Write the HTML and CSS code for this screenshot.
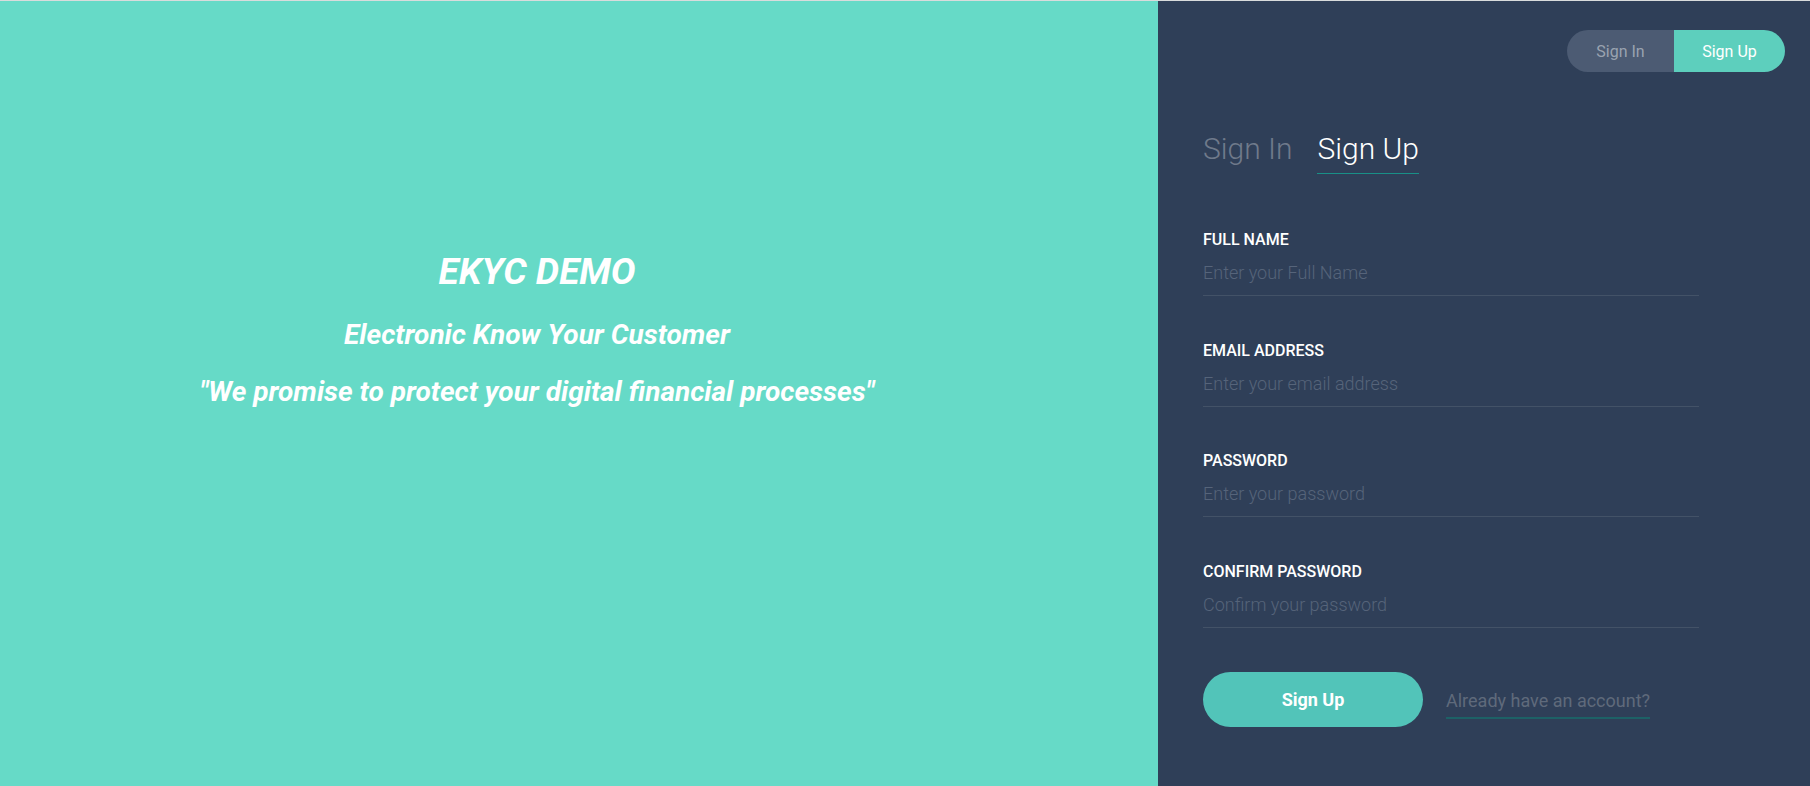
FILE: index.html
```html
<!DOCTYPE html>
<html lang="en">
<head>
<meta charset="utf-8">
<title>EKYC DEMO</title>
<link rel="stylesheet" href="styles.css">
</head>
<body>
<div class="app">
  <aside class="aside">
    <h1 class="aside-title">EKYC DEMO</h1>
    <p class="aside-sub">Electronic Know Your Customer</p>
    <p class="aside-quote">"We promise to protect your digital financial processes"</p>
  </aside>
  <main class="form-panel">
    <div class="switcher">
      <a class="switcher-item" href="#">Sign In</a>
      <a class="switcher-item switcher-item-active" href="#">Sign Up</a>
    </div>
    <div class="form-title">
      <a class="form-title-link" href="#">Sign In</a>
      <a class="form-title-link form-title-link-active" href="#">Sign Up</a>
    </div>
    <form class="form">
      <div class="field">
        <label class="field-label" for="name">Full Name</label>
        <input class="field-input" id="name" type="text" placeholder="Enter your Full Name">
      </div>
      <div class="field">
        <label class="field-label" for="email">Email Address</label>
        <input class="field-input" id="email" type="email" placeholder="Enter your email address">
      </div>
      <div class="field">
        <label class="field-label" for="password">Password</label>
        <input class="field-input" id="password" type="password" placeholder="Enter your password">
      </div>
      <div class="field">
        <label class="field-label" for="confirm">Confirm Password</label>
        <input class="field-input" id="confirm" type="password" placeholder="Confirm your password">
      </div>
      <div class="actions">
        <button class="submit" type="button">Sign Up</button>
        <a class="already" href="#">Already have an account?</a>
      </div>
    </form>
  </main>
</div>
</body>
</html>
```
FILE: styles.css
```css
* { box-sizing: border-box; }
html, body { margin: 0; padding: 0; height: 100%; }
body {
  font-family: Roboto, "Liberation Sans", sans-serif;
  background: #66dac7;
}
.app {
  display: flex;
  height: 786px;
  border-top: 1px solid #d9dcdc;
}
.aside {
  width: 1158px;
  flex: none;
  background: #66dac7;
  color: #fff;
  text-align: center;
  padding: 251px 84px 0 0;
  font-style: italic;
  font-weight: 700;
}
.aside-title {
  margin: 0 0 28px;
  font-size: 37px;
  line-height: 40px;
  font-weight: 700;
}
.aside-sub {
  margin: 0 0 26.5px;
  font-size: 28px;
  line-height: 30px;
}
.aside-quote {
  margin: 0;
  font-size: 28px;
  line-height: 30px;
}
.form-panel {
  flex: 1;
  background: #2f3f58;
  padding: 29px 25px 0 45px;
  display: flex;
  flex-direction: column;
}
.switcher {
  align-self: flex-end;
  display: flex;
  height: 42px;
  border-radius: 21px;
  overflow: hidden;
}
.switcher-item {
  display: flex;
  align-items: center;
  justify-content: center;
  width: 107px;
  background: #4c5b73;
  color: #9aa3b0;
  font-size: 16px;
  font-weight: 400;
  text-decoration: none;
}
.switcher-item-active {
  width: 111px;
  background: #5dcfbd;
  color: #fff;
}
.form-title {
  margin-top: 59px;
  display: flex;
  gap: 25px;
}
.form-title-link {
  font-size: 30px;
  line-height: 35px;
  font-weight: 300;
  color: #6f7a8b;
  text-decoration: none;
  padding-bottom: 7px;
}
.form-title-link-active {
  color: #fff;
  border-bottom: 1px solid #199087;
}
.form {
  width: 496px;
  margin-top: 56px;
}
.field {
  margin-bottom: 44.5px;
}
.field-label {
  display: block;
  color: #fff;
  font-size: 16px;
  line-height: 20px;
  font-weight: 500;
  text-transform: uppercase;
}
.field-input {
  display: block;
  width: 100%;
  height: 46px;
  padding: 0;
  margin: 0;
  background: transparent;
  border: none;
  border-bottom: 1px solid #435267;
  outline: none;
  color: #fff;
  font-family: Roboto, "Liberation Sans", sans-serif;
  font-size: 18px;
  font-weight: 300;
}
.field-input::placeholder {
  color: #56647a;
}
.actions {
  display: flex;
  align-items: center;
  margin-top: 3px;
}
.submit {
  width: 220px;
  height: 55px;
  border: none;
  border-radius: 28px;
  background: #52c4b9;
  color: #fff;
  font-family: Roboto, "Liberation Sans", sans-serif;
  font-size: 18px;
  font-weight: 700;
}
.already {
  margin-left: 23px;
  margin-top: 11px;
  padding-bottom: 6px;
  color: #5f6a7b;
  font-size: 18px;
  line-height: 20px;
  text-decoration: none;
  border-bottom: 2px solid #1d6166;
}
```
